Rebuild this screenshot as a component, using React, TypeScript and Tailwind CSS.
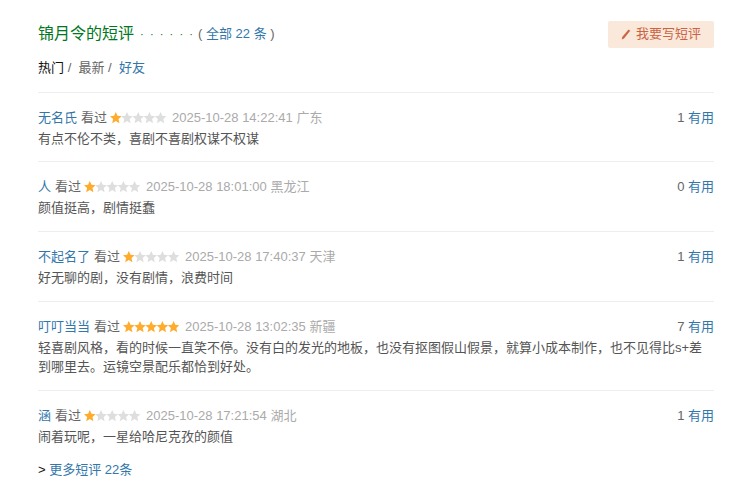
type R = { name: string; n: number; time: string; loc: string; text: string; votes: number };
const rows: R[] = [
  { name: '无名氏', n: 1, time: '2025-10-28 14:22:41', loc: '广东', text: '有点不伦不类，喜剧不喜剧权谋不权谋', votes: 1 },
  { name: '人', n: 1, time: '2025-10-28 18:01:00', loc: '黑龙江', text: '颜值挺高，剧情挺蠢', votes: 0 },
  { name: '不起名了', n: 1, time: '2025-10-28 17:40:37', loc: '天津', text: '好无聊的剧，没有剧情，浪费时间', votes: 1 },
  { name: '叮叮当当', n: 5, time: '2025-10-28 13:02:35', loc: '新疆', text: '轻喜剧风格，看的时候一直笑不停。没有白的发光的地板，也没有抠图假山假景，就算小成本制作，也不见得比s+差到哪里去。运镜空景配乐都恰到好处。', votes: 7 },
  { name: '涵', n: 1, time: '2025-10-28 17:21:54', loc: '湖北', text: '闹着玩呢，一星给哈尼克孜的颜值', votes: 1 },
];

function Stars({ n }: { n: number }) {
  return (
    <svg width="56" height="12" viewBox="0 0 56 12" className="shrink-0">
      {[0, 1, 2, 3, 4].map((i) => (
        <path
          key={i}
          transform={`translate(${i * 11.2} 0)`}
          d="M5.8 0 L7.5 3.8 L11.6 4.2 L8.5 7 L9.4 11.2 L5.8 9 L2.2 11.2 L3.1 7 L0 4.2 L4.1 3.8 Z"
          fill={i < n ? '#ffac2d' : '#dedede'}
        />
      ))}
    </svg>
  );
}

function Row({ r }: { r: R }) {
  return (
    <div className="border-t border-[#eeeeee] pt-[14.5px] pb-[13.2px]">
      <div className="flex items-center justify-between h-[21px]">
        <div className="flex items-center">
          <span className="text-[#3377aa]">{r.name}</span>
          <span className="ml-[4px] text-[#666666]">看过</span>
          <span className="ml-[3px]"><Stars n={r.n} /></span>
          <span className="ml-[6px] text-[#aaaaaa]">{r.time} {r.loc}</span>
        </div>
        <div className="text-[#666666]">
          {r.votes} <span className="text-[#3377aa]">有用</span>
        </div>
      </div>
      <p className="text-[#555555] leading-[19.5px] mt-[0.5px]">{r.text}</p>
    </div>
  );
}

export default function App() {
  return (
    <div
      className="w-[747px] h-[497px] bg-white overflow-hidden pl-[38px] pr-[33px] pt-[21px] text-[13px] leading-[20px]"
      style={{ fontFamily: '"Liberation Sans", "Noto Sans CJK SC", sans-serif' }}
    >
      <div className="flex justify-between items-start h-[37px]">
        <div className="flex items-center h-[24px] mt-[1px]">
          <span className="text-[16px] text-[#007722]">锦月令的短评</span>
          <span className="ml-[6px] text-[#007722] text-[11px]">
            <span className="tracking-[6.2px]">·····</span>·
          </span>
          <span className="ml-[5px] text-[#666666]">( <span className="text-[#3377aa]">全部 22 条</span> )</span>
        </div>
        <div className="flex items-center justify-center w-[106px] h-[27px] pb-[1px] rounded-[2px] bg-[#fae9da] text-[#ca6445]">
          <svg width="10" height="11" viewBox="0 0 10 11" className="mr-[5px]">
            <path d="M7.6 0.6 L9.2 1.8 L3 9.4 L0.8 10.4 L1.2 8 Z" fill="#ca6445" />
          </svg>
          我要写短评
        </div>
      </div>
      <div className="h-[33.6px]">
        <span className="text-[#111111]">热门</span>
        <span className="text-[#666666]"> /&nbsp;&nbsp;</span>
        <span className="text-[#666666]">最新</span>
        <span className="text-[#666666]"> /&nbsp;&nbsp;</span>
        <span className="text-[#3377aa]">好友</span>
      </div>
      {rows.map((r) => <Row key={r.name} r={r} />)}
      <div className="text-[#111111]">&gt; <span className="text-[#3377aa]">更多短评 22条</span></div>
    </div>
  );
}
